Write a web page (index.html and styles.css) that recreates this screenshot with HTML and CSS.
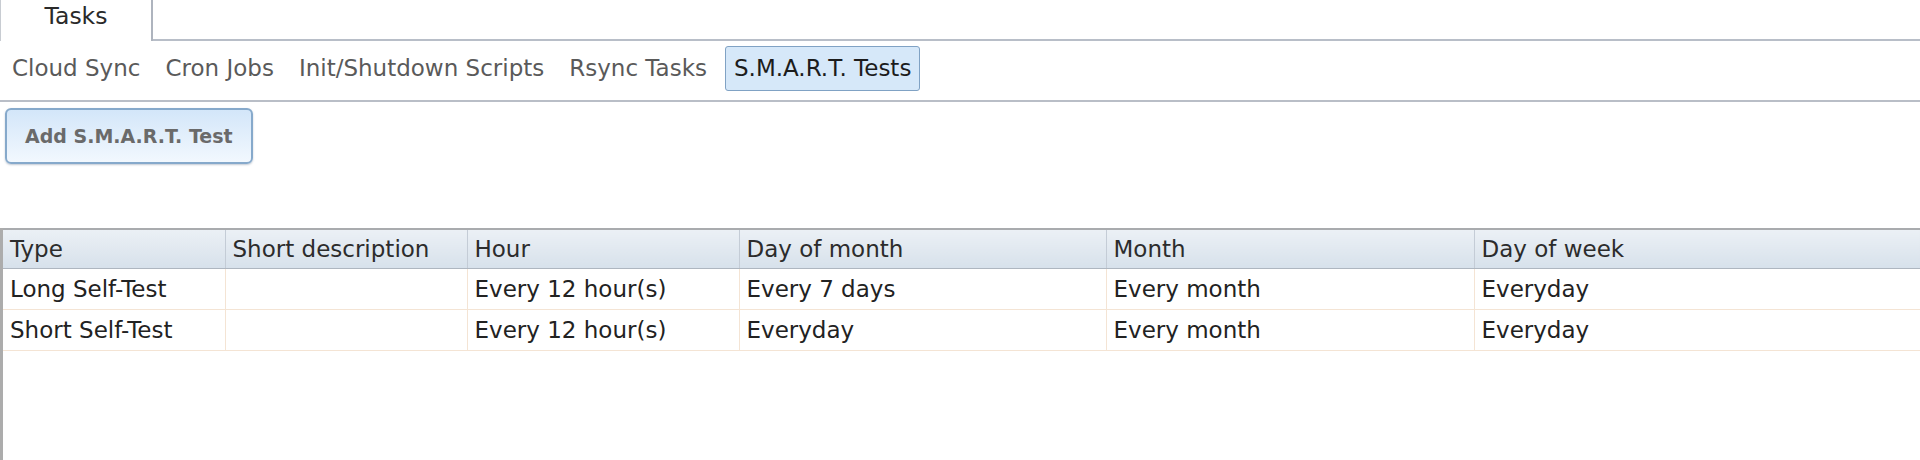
FILE: index.html
```html
<!DOCTYPE html>
<html lang="en">
<head>
  <meta charset="UTF-8">
  <title>Tasks</title>
  <link rel="stylesheet" href="styles.css">
</head>
<body>
  <div class="tabbar">
    <div class="tab active">Tasks</div>
  </div>
  <div class="subnav">
    <a class="nav-item">Cloud Sync</a>
    <a class="nav-item">Cron Jobs</a>
    <a class="nav-item">Init/Shutdown Scripts</a>
    <a class="nav-item">Rsync Tasks</a>
    <a class="nav-item selected">S.M.A.R.T. Tests</a>
  </div>
  <div class="toolbar">
    <button class="add-btn">Add S.M.A.R.T. Test</button>
  </div>
  <div class="grid">
    <table>
      <colgroup>
        <col class="c-type">
        <col class="c-desc">
        <col class="c-hour">
        <col class="c-dom">
        <col class="c-month">
        <col>
      </colgroup>
      <thead>
        <tr>
          <th>Type</th>
          <th>Short description</th>
          <th>Hour</th>
          <th>Day of month</th>
          <th>Month</th>
          <th>Day of week</th>
        </tr>
      </thead>
      <tbody>
        <tr>
          <td>Long Self-Test</td>
          <td></td>
          <td>Every 12 hour(s)</td>
          <td>Every 7 days</td>
          <td>Every month</td>
          <td>Everyday</td>
        </tr>
        <tr>
          <td>Short Self-Test</td>
          <td></td>
          <td>Every 12 hour(s)</td>
          <td>Everyday</td>
          <td>Every month</td>
          <td>Everyday</td>
        </tr>
      </tbody>
    </table>
  </div>
</body>
</html>
```

FILE: styles.css
```css
body {
  margin: 0;
  font-family: "DejaVu Sans", Verdana, sans-serif;
  font-size: 23px;
  color: #222;
  background: #fff;
}
.tabbar {
  display: flex;
  height: 39px;
  border-bottom: 2px solid #b8bec8;
}
.tab {
  width: 153px;
  height: 41px;
  box-sizing: border-box;
  border-left: 1px solid #c8ccd2;
  border-right: 2px solid #aeb4be;
  background: #fff;
  text-align: center;
  font-size: 23.5px;
  line-height: 32px;
  color: #2a2a2a;
}
.subnav {
  display: flex;
  gap: 11px;
  padding: 5px 5px 9px;
  border-bottom: 2px solid #b9bec7;
}
.nav-item {
  padding: 8px 6px;
  line-height: 27px;
  border: 1px solid transparent;
  border-radius: 3px;
  color: #5a5a5a;
  cursor: pointer;
}
.nav-item.selected {
  padding: 8px 8px;
  background: #d6e8f9;
  border-color: #80a2c4;
  color: #1c1c1c;
}
.toolbar {
  padding: 6px 5px 64px;
}
.add-btn {
  height: 56px;
  padding: 0 18px;
  font-family: inherit;
  font-size: 19px;
  font-weight: bold;
  color: #6a6a6a;
  background: linear-gradient(#d3e6f9, #f2f8fe);
  border: 2px solid #86a9cb;
  border-radius: 6px;
  box-shadow: 0 1px 2px rgba(80, 100, 130, 0.35);
  cursor: pointer;
}
.grid {
  border-left: 3px solid #acacac;
  min-height: calc(100vh - 228px);
  box-sizing: border-box;
}
table {
  width: 100%;
  border-collapse: collapse;
  table-layout: fixed;
}
.c-type { width: 222px; }
.c-desc { width: 242px; }
.c-hour { width: 272px; }
.c-dom { width: 367px; }
.c-month { width: 368px; }
th {
  height: 38px;
  padding: 0 7px;
  text-align: left;
  font-weight: normal;
  color: #2c2c2c;
  background: linear-gradient(#ebf0f5, #d7e1eb);
  border-top: 2px solid #a9abae;
  border-bottom: 1px solid #aeb6c0;
  border-left: 1px solid #c4ccd6;
}
th:first-child, td:first-child {
  border-left: none;
}
td {
  height: 40px;
  padding: 0 7px;
  border-bottom: 1px solid #f4e4d4;
  border-left: 1px solid #f4e4d4;
  white-space: nowrap;
}
```
